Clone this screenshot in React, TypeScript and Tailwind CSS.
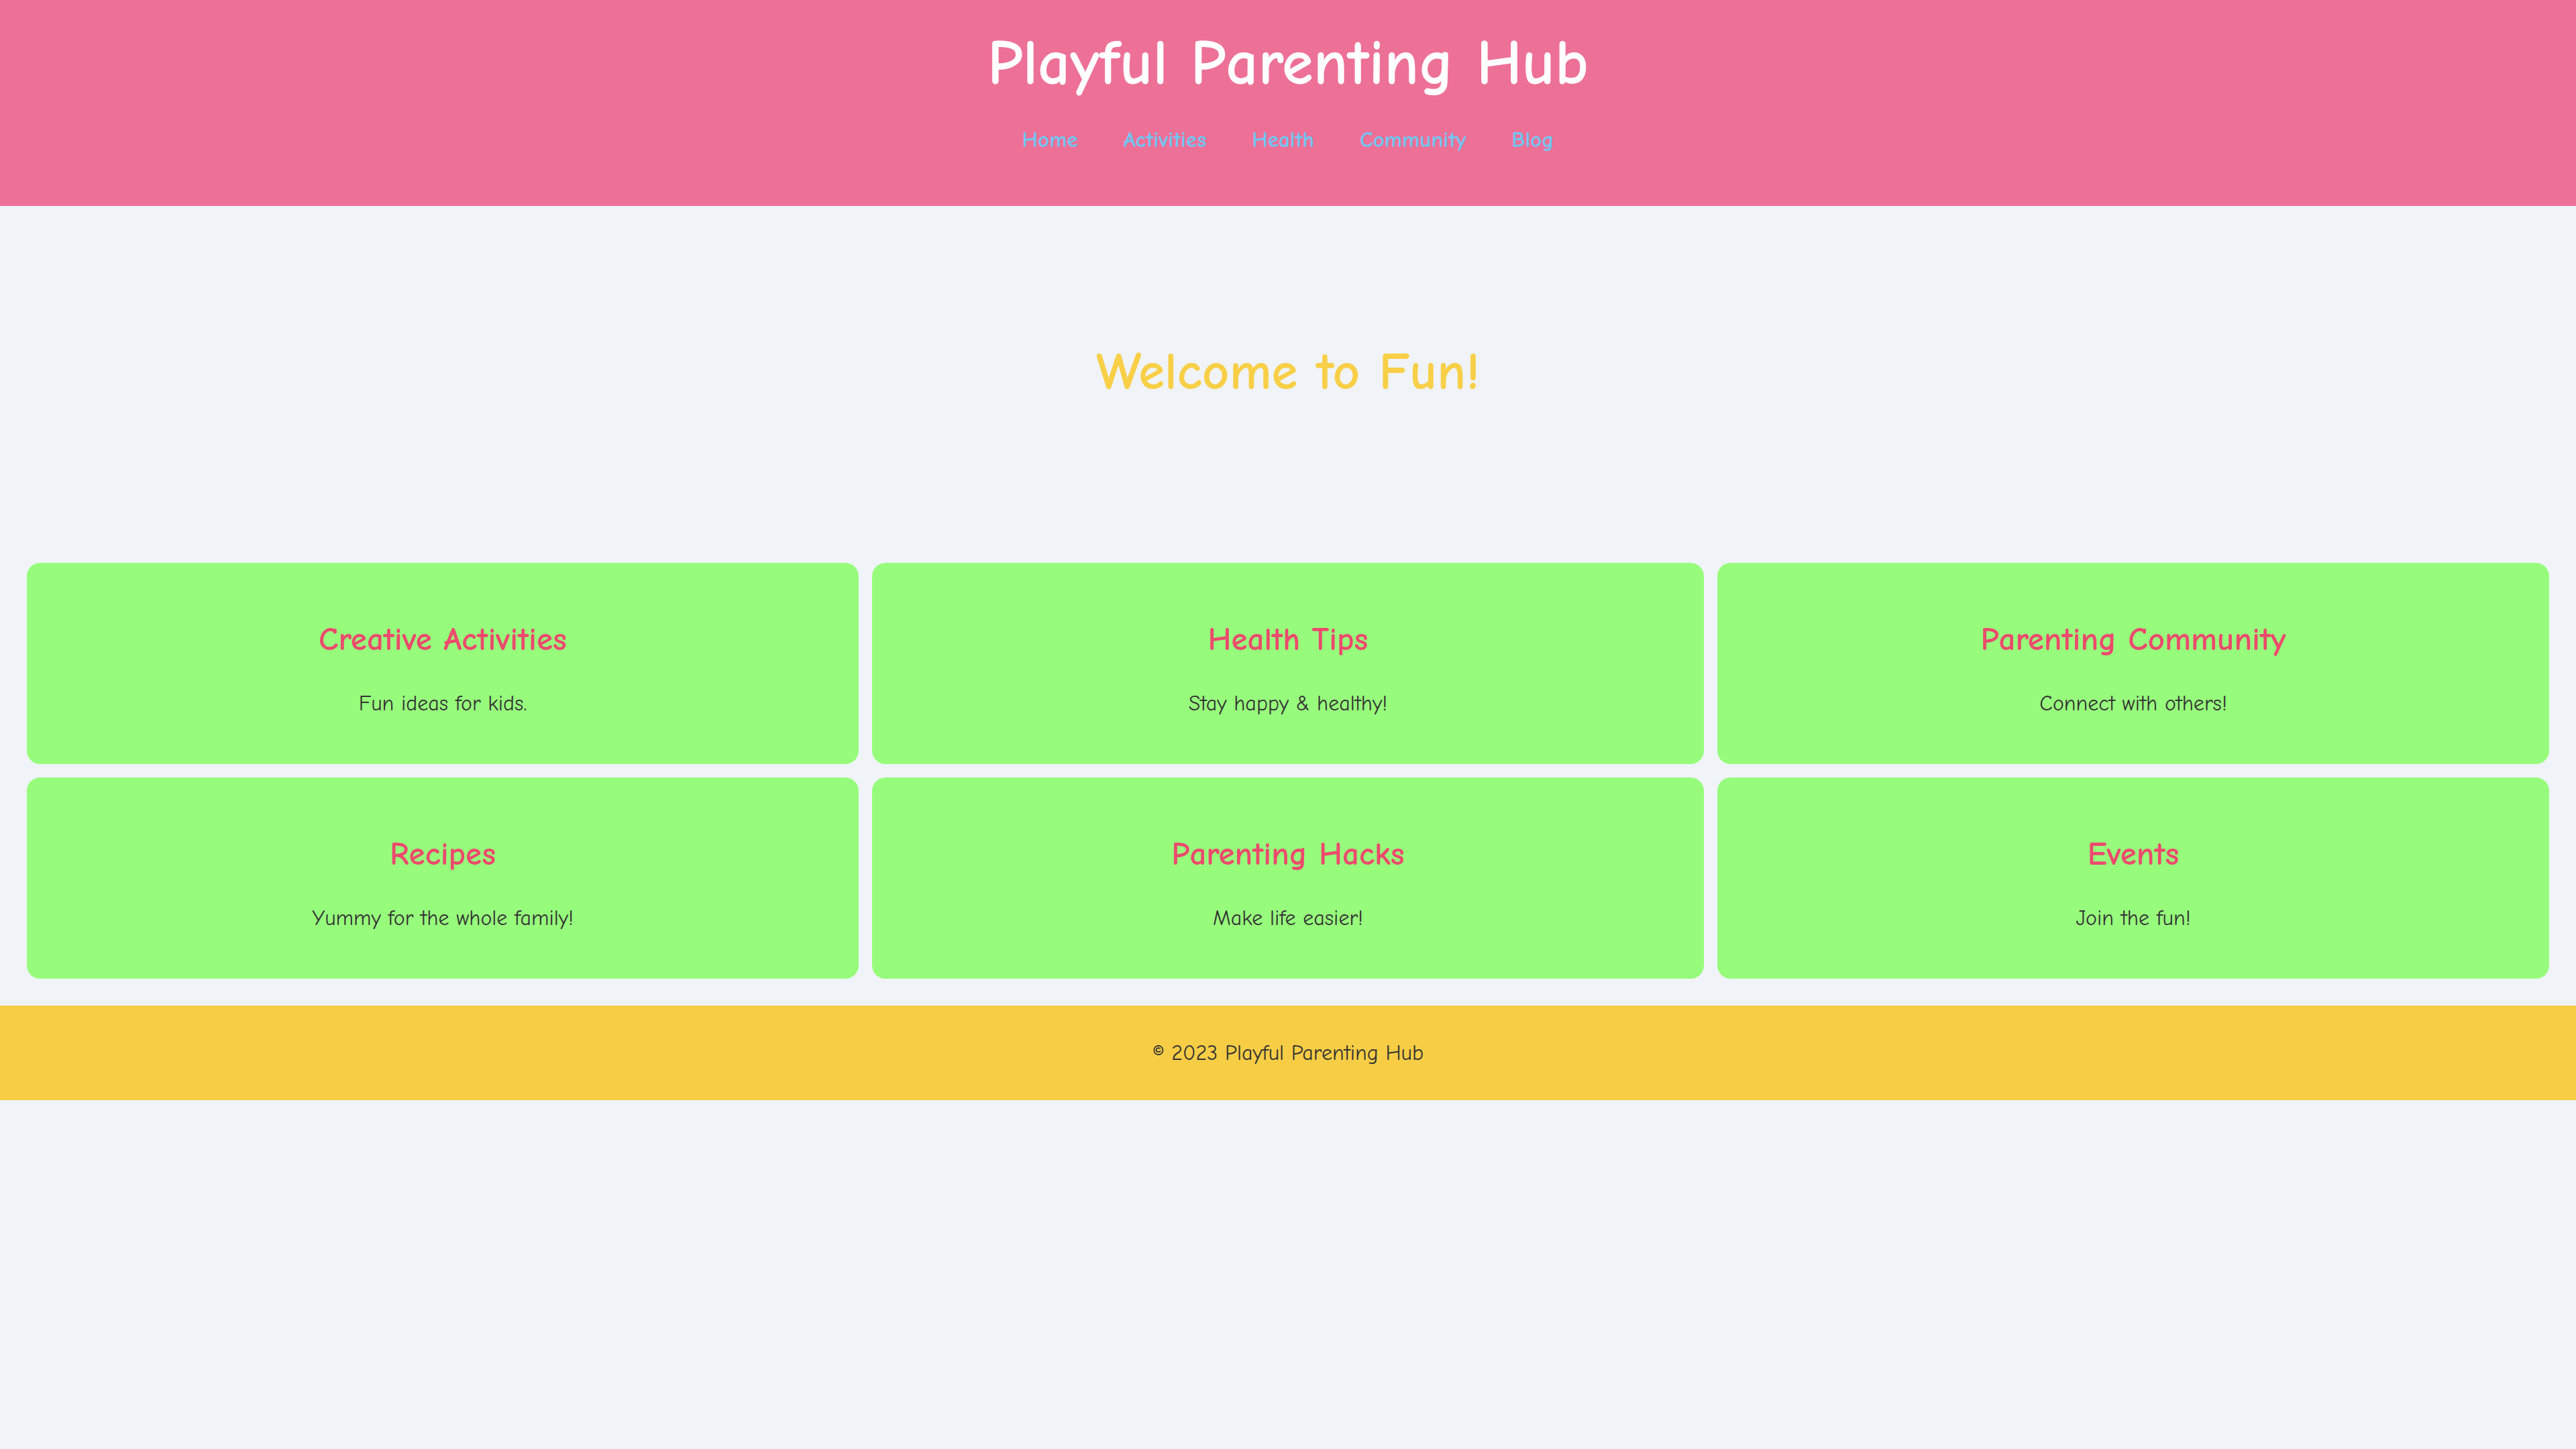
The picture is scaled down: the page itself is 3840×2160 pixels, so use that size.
const cards = [
  { title: "Creative Activities", text: "Fun ideas for kids." },
  { title: "Health Tips", text: "Stay happy & healthy!" },
  { title: "Parenting Community", text: "Connect with others!" },
  { title: "Recipes", text: "Yummy for the whole family!" },
  { title: "Parenting Hacks", text: "Make life easier!" },
  { title: "Events", text: "Join the fun!" },
];

const links = ["Home", "Activities", "Health", "Community", "Blog"];

const App = () => {
  return (
    <div className="min-h-screen bg-[#f0f4f8] font-['Comic_Sans_MS','Comic_Neue',Lato,sans-serif] text-[#333333]">
      <header className="flex flex-col items-center bg-[#ed7097] pt-[45px] pb-[74px]">
        <h1 className="text-[95px] leading-[98px] font-bold text-white">Playful Parenting Hub</h1>
        <nav className="mt-[41px] flex gap-[68px]">
          {links.map((l) => (
            <a key={l} href="#" className="text-[33px] leading-[49px] font-bold text-[#72c5f0]">
              {l}
            </a>
          ))}
        </nav>
      </header>

      <section className="pt-[204px] pb-[200px] text-center">
        <h2 className="text-[79px] leading-[88px] font-bold text-[#f8cf47]">Welcome to Fun!</h2>
      </section>

      <section className="grid grid-cols-3 gap-[20px] px-[40px] pt-[40px] pb-[40px]">
        {cards.map((c) => (
          <div key={c.title} className="flex flex-col items-center rounded-[20px] bg-[#97fc7c] pt-[80px] pb-[66px] text-center">
            <h3 className="text-[49px] leading-[69px] font-bold text-[#ec4a6d]">{c.title}</h3>
            <p className="mt-[36px] text-[32px] leading-[49px]">{c.text}</p>
          </div>
        ))}
      </section>

      <footer className="bg-[#f7cd45] py-[46px] text-center">
        <p className="text-[32px] leading-[49px]">© 2023 Playful Parenting Hub</p>
      </footer>
    </div>
  );
};

export default App;
